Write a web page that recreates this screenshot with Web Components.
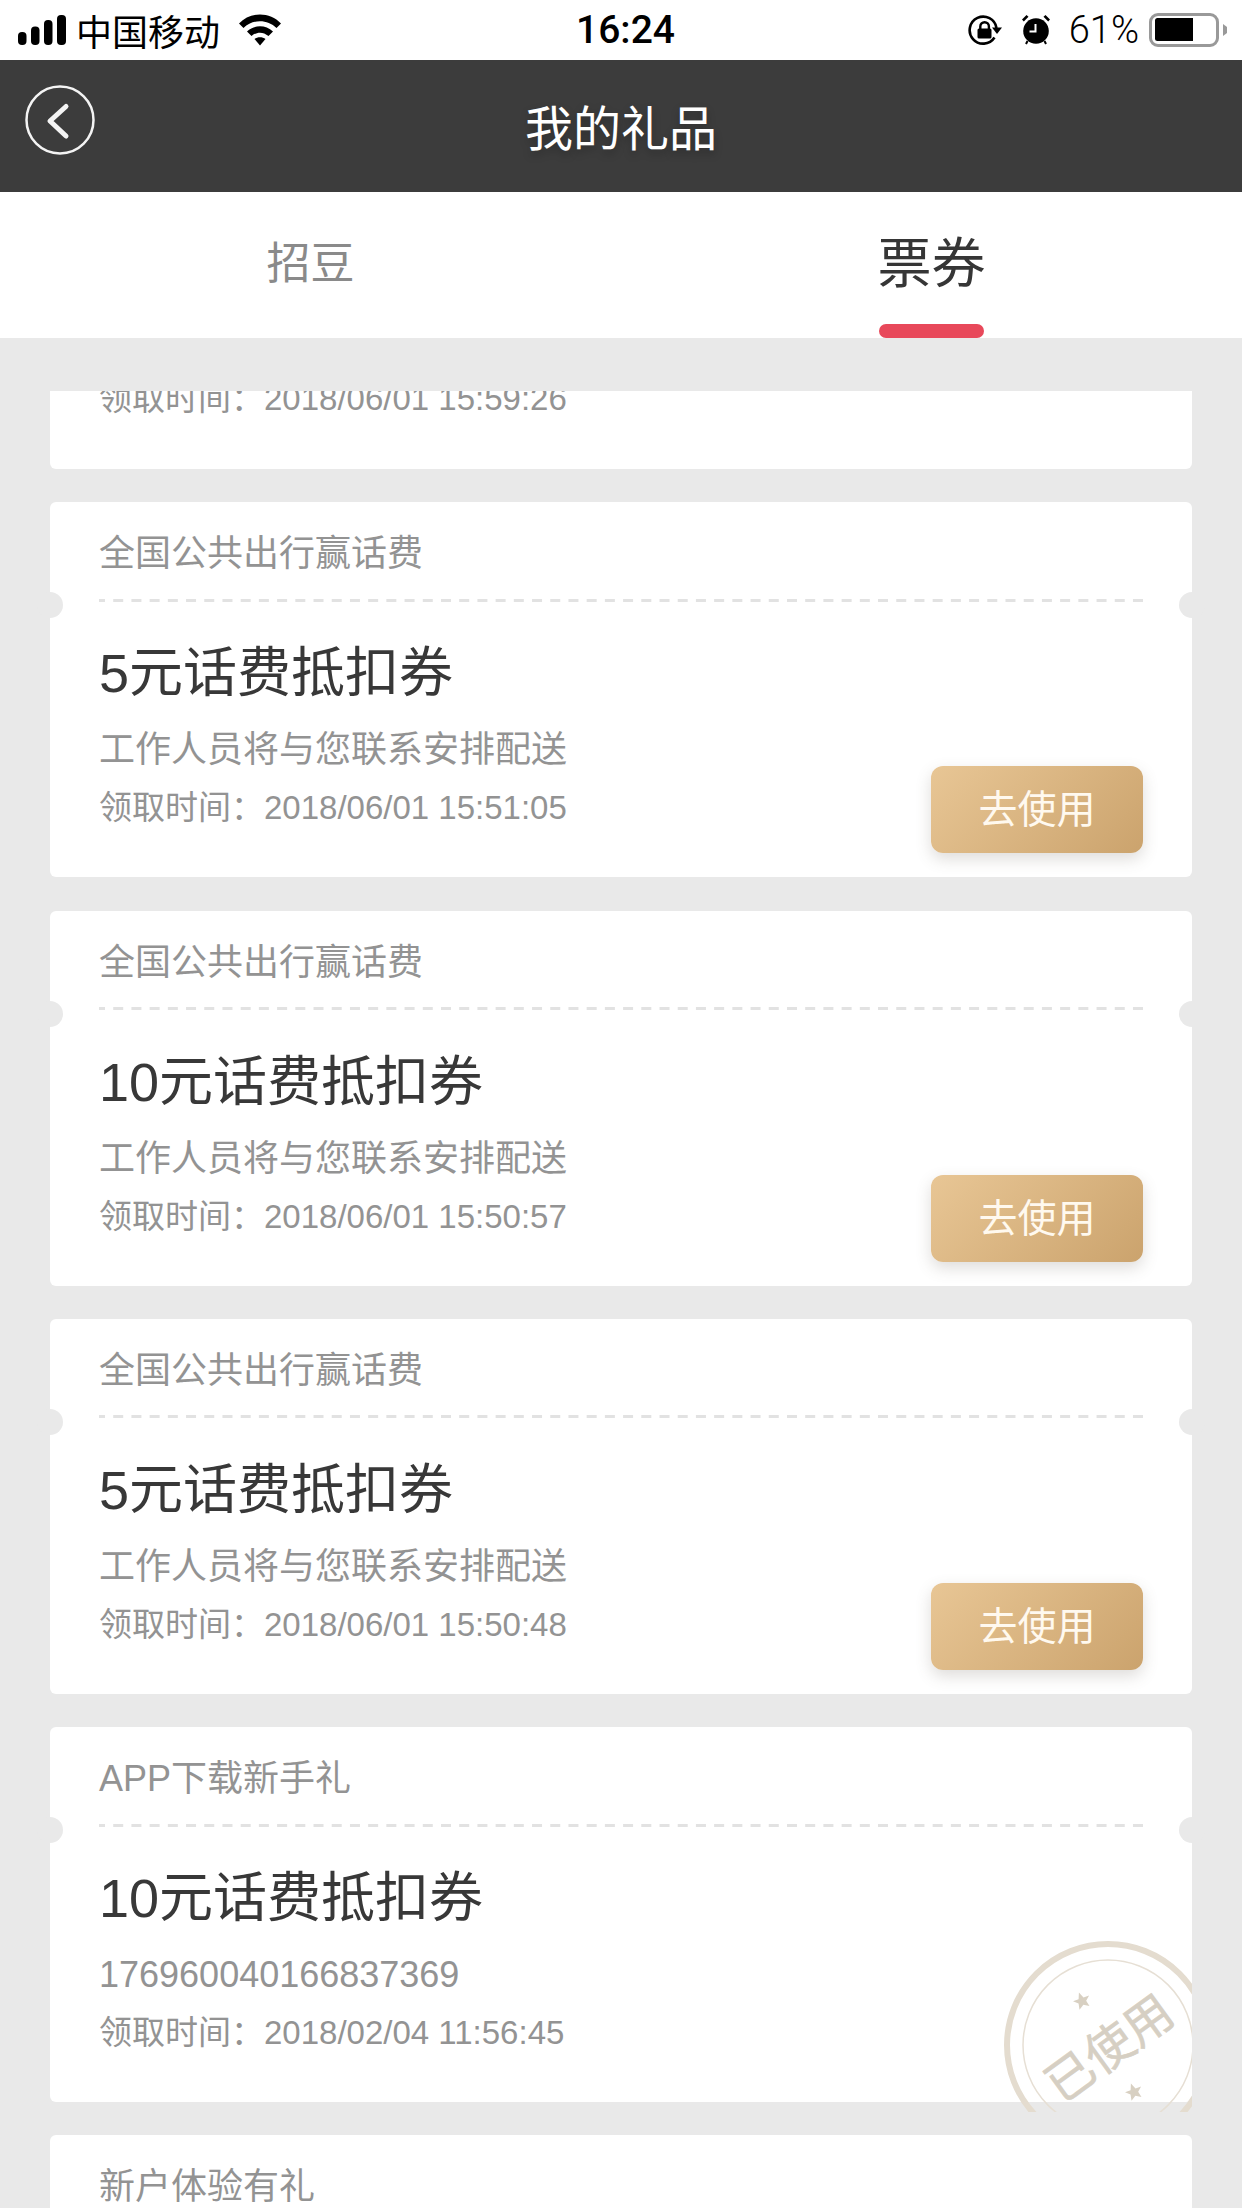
<!DOCTYPE html>
<html lang="zh">
<head>
<meta charset="utf-8">
<title>我的礼品</title>
<style>
html,body{margin:0;padding:0;background:#e9e9e9;}
body{width:1242px;height:2208px;overflow:hidden;font-family:"Liberation Sans","Noto Sans CJK SC",sans-serif;}
</style>
</head>
<body>
<app-page>
  <status-bar></status-bar>
  <nav-bar>我的礼品</nav-bar>
  <tab-bar></tab-bar>
  <gift-list>
    <card-tail>领取时间：2018/06/01 15:59:26</card-tail>
    <gift-card source="全国公共出行赢话费" name="5元话费抵扣券" note="工作人员将与您联系安排配送" time="领取时间：2018/06/01 15:51:05" action></gift-card>
    <gift-card source="全国公共出行赢话费" name="10元话费抵扣券" note="工作人员将与您联系安排配送" time="领取时间：2018/06/01 15:50:57" action></gift-card>
    <gift-card source="全国公共出行赢话费" name="5元话费抵扣券" note="工作人员将与您联系安排配送" time="领取时间：2018/06/01 15:50:48" action></gift-card>
    <gift-card source="APP下载新手礼" name="10元话费抵扣券" note="176960040166837369" time="领取时间：2018/02/04 11:56:45" used></gift-card>
    <gift-card source="新户体验有礼" head-only></gift-card>
  </gift-list>
</app-page>
<script>
const FONT='"Liberation Sans","Noto Sans CJK SC",sans-serif';
function define(name,css,html){
  customElements.define(name,class extends HTMLElement{
    constructor(){super();this.attachShadow({mode:'open'});}
    connectedCallback(){
      this.shadowRoot.innerHTML='<style>'+css+'</style>'+(typeof html==='function'?html(this):html);
    }
  });
}
define('app-page',`:host{display:flex;flex-direction:column;width:1242px;height:2208px;overflow:hidden;background:#e9e9e9;font-family:${FONT};}`,`<slot></slot>`);

define('status-bar',`
:host{display:grid;grid-template-columns:1fr auto 1fr;align-items:center;height:60px;background:#fff;color:#000;padding:0 15px 0 18px;box-sizing:border-box;flex:none;}
.l,.r{display:flex;align-items:center;}
.carrier{font-size:36px;margin-left:10px;line-height:60px;font-family:"Noto Sans CJK SC",sans-serif;font-weight:400;}
.wifi{margin-left:19px;}
.time{font-size:39px;font-weight:500;line-height:60px;margin-right:-6px;font-family:Roboto,"Liberation Sans",sans-serif;}
.r{justify-content:flex-end;}
.pct{font-size:38px;margin:0 10px 0 19px;line-height:60px;font-family:Roboto,"Liberation Sans",sans-serif;font-weight:300;}
svg{display:block;}
`,`
<div class="l">
  <svg width="48" height="30" viewBox="0 0 48 30"><rect x="0" y="17" width="8.500" height="13" rx="4"/><rect x="13" y="11.500" width="8.500" height="18.500" rx="4"/><rect x="26" y="5" width="8.500" height="25" rx="4"/><rect x="39" y="0" width="9" height="30" rx="4"/></svg>
  <span class="carrier">中国移动</span>
  <svg class="wifi" width="42" height="32" viewBox="0 0 42 32"><path d="M0 9.500C11-2.500 31-2.500 42 9.500L37.500 14C28.500 5 13.500 5 4.500 14Z"/><path d="M8 17.500C15.500 10.500 26.500 10.500 34 17.500L29.500 22C24 17.500 18 17.500 12.500 22Z"/><path d="M15.500 25C18.500 22.500 23.500 22.500 26.500 25L21 31.500Z"/></svg>
</div>
<div class="time">16:24</div>
<div class="r">
  <svg width="34" height="30" viewBox="0 0 34 30" fill="none"><path d="M26.500 22.500A13.500 13.500 0 1 1 28.500 13" stroke="#000" stroke-width="2.600"/><path d="M24 12.500h10l-5 6.500z" fill="#000"/><rect x="9.500" y="13.500" width="14" height="10" rx="1.500" fill="#000"/><path d="M12.300 14v-2.500a4.300 4.300 0 0 1 8.600 0V14" stroke="#000" stroke-width="2.400"/></svg>
  <svg style="margin-left:20px" width="28" height="30" viewBox="0 0 28 30"><circle cx="14" cy="16" r="12.800"/><path d="M13.500 9v7.500H7.500" fill="none" stroke="#fff" stroke-width="2"/><path d="M0 4.500 4.500 0 6.500 1.800 1.800 6.500zM28 4.500 23.500 0 21.500 1.800 26.200 6.500z"/><path d="M5.500 26l-1.500 3M22.500 26l1.500 3" stroke="#000" stroke-width="2"/></svg>
  <span class="pct">61%</span>
  <svg width="78" height="34" viewBox="0 0 78 34"><rect x="1.500" y="1.500" width="67" height="31" rx="7.500" fill="none" stroke="#999" stroke-width="3"/><path d="M8.500 5H44V28H8.500A2.500 2.500 0 0 1 6 25.500V7.500A2.500 2.500 0 0 1 8.500 5Z"/><path d="M74 11l4 3v6l-4 3z" fill="#999"/></svg>
</div>`);

define('nav-bar',`
:host{display:flex;align-items:center;justify-content:center;position:relative;height:132px;background:#3c3c3c;color:#fff;flex:none;font-size:48px;font-family:"Noto Sans CJK SC",sans-serif;padding-bottom:3px;box-sizing:border-box;}
.back{position:absolute;left:25px;top:25px;display:block;}
.t{text-shadow:0 4px 8px rgba(0,0,0,.25);}
`,`<svg class="back" width="70" height="70" viewBox="0 0 70 70" fill="none" stroke="#f4f4f4"><circle cx="35" cy="35" r="33.500" stroke-width="2.500"/><path d="M41 21.500 25 36 41 51" stroke-width="5" stroke-linecap="round" stroke-linejoin="round"/></svg><span class="t"><slot></slot></span>`);

define('tab-bar',`
:host{display:grid;grid-template-columns:1fr 1fr;height:146px;background:#fff;flex:none;font-family:"Noto Sans CJK SC",sans-serif;}
.tab{display:flex;flex-direction:column;align-items:center;justify-content:flex-start;color:#8a8a8a;}
.tab span{display:block;height:132px;line-height:136px;font-size:44px;}
.on{color:#363636;}
.on span{font-size:54px;}
.on i{width:105px;height:14px;background:#e8485a;border-radius:7px;display:block;flex:none;}
`,`<div class="tab"><span>招豆</span></div><div class="tab on"><span>票券</span><i></i></div>`);

define('gift-list',`
:host{display:flex;flex-direction:column;gap:33.250px;margin-top:53px;padding:0 50px;flex:1;min-height:0;overflow:hidden;}
`,`<slot></slot>`);

define('card-tail',`
:host{display:block;height:78px;flex:none;background:#fff;border-radius:0 0 6px 6px;overflow:hidden;padding-left:49px;}
.t{font-size:33px;line-height:40px;color:#939393;margin-top:-12px;white-space:nowrap;}
`,`<div class="t"><slot></slot></div>`);

define('gift-card',`
:host{display:block;position:relative;flex:none;width:1142px;background:#fff;border-radius:6px;height:375px;box-sizing:border-box;}
.head{margin:0 49px;height:98px;box-sizing:border-box;padding-top:32px;font-size:36px;line-height:40px;color:#939393;white-space:nowrap;position:relative;}
.dash{position:absolute;left:0;bottom:-1.500px;display:block;}
.notch{position:absolute;top:90px;width:26px;height:26px;border-radius:50%;background:#e9e9e9;}
.n1{left:-13px}.n2{right:-13px}
.main{display:flex;justify-content:space-between;align-items:flex-end;padding:0 49px 24px;height:277px;box-sizing:border-box;}
.txt{align-self:flex-start;padding-top:40px;}
.name{font-size:54px;line-height:66px;color:#383838;white-space:nowrap;}
.note{font-size:36px;line-height:44px;color:#939393;margin-top:22px;white-space:nowrap;}
.time{font-size:33px;line-height:40px;color:#939393;margin-top:16px;white-space:nowrap;}
`,el=>{
 const g=a=>el.getAttribute(a)||'';
 if(el.hasAttribute('head-only')) return `<div class="head">${g('source')}</div>`;
 return `<div class="head">${g('source')}<svg class="dash" width="1044" height="3"><line x1="0" y1="1.500" x2="1044" y2="1.500" stroke="#e2e2e2" stroke-width="3" stroke-dasharray="10 8.210" stroke-dashoffset="4"/></svg></div>
 <div class="notch n1"></div><div class="notch n2"></div>
 <div class="main"><div class="txt"><div class="name">${g('name')}</div><div class="note">${g('note')}</div><div class="time">${g('time')}</div></div>
 ${el.hasAttribute('action')?'<use-button>去使用</use-button>':''}</div>
 ${el.hasAttribute('used')?'<used-stamp></used-stamp>':''}`;
});

define('use-button',`
:host{display:flex;align-items:center;justify-content:center;width:212px;height:87px;flex:none;box-sizing:border-box;padding-bottom:7px;border-radius:12px;color:#fff9ef;font-size:39px;font-family:"Noto Sans CJK SC",sans-serif;background:linear-gradient(135deg,#e8c695,#cba36d);box-shadow:0 6px 16px rgba(90,80,70,.2);}
`,`<slot></slot>`);

define('used-stamp',`
:host{position:absolute;right:0;bottom:-10px;width:192px;height:177px;display:block;}
svg{display:block;overflow:visible;}
text{font-family:"Noto Sans CJK SC",sans-serif;font-size:48px;fill:#d6cfc3;stroke:#d6cfc3;stroke-width:.6px;}
`,`<svg width="192" height="177" viewBox="0 0 192 177" fill="none">
<clipPath id="box"><rect width="192" height="177"/></clipPath>
<g clip-path="url(#box)">
<circle cx="108" cy="110" r="101" stroke="#e4dccf" stroke-width="6"/>
<circle cx="108" cy="110" r="85" stroke="#e6dfd4" stroke-width="1.500"/>
<polygon transform="translate(82 66) rotate(-20) scale(9)" fill="#d8d0c2" points="0,-1 .29,-.31 .95,-.31 .45,.12 .59,.81 0,.45 -.59,.81 -.45,.12 -.95,-.31 -.29,-.31"/>
<polygon transform="translate(134 157) rotate(-20) scale(9)" fill="#d8d0c2" points="0,-1 .29,-.31 .95,-.31 .45,.12 .59,.81 0,.45 -.59,.81 -.45,.12 -.95,-.31 -.29,-.31"/>
</g>
<text x="107" y="110" text-anchor="middle" dominant-baseline="central" transform="rotate(-36 107 110)">已使用</text>
</svg>`);
</script>
</body>
</html>
